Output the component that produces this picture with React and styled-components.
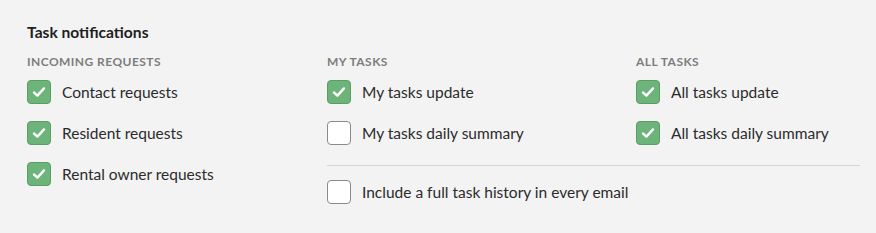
import React from "react";
import styled, { createGlobalStyle } from "styled-components";

const Global = createGlobalStyle`
  html, body { margin: 0; padding: 0; background: #f3f3f3; }
  body { font-family: "Lato", "Open Sans", sans-serif; color: #2b2b2b; }
`;

const Panel = styled.section`
  width: 876px;
  height: 233px;
  box-sizing: border-box;
  padding: 22px 16px 0 27px;
  background: #f3f3f3;
`;

const Title = styled.h2`
  margin: 0 0 12px;
  font-size: 15.6px;
  line-height: 20px;
  font-weight: 700;
  color: #1e1e1e;
`;

const Layout = styled.div`
  display: grid;
  grid-template-columns: 300px 1fr;
`;

const Right = styled.div`
  display: flex;
  flex-direction: column;
`;

const Pair = styled.div`
  display: grid;
  grid-template-columns: 309px 1fr;
`;

const Column = styled.div`
  display: flex;
  flex-direction: column;
`;

const Label = styled.div`
  font-size: 12px;
  line-height: 16px;
  font-weight: 700;
  letter-spacing: 0.45px;
  text-transform: uppercase;
  color: #7d7d7d;
  margin-bottom: 10px;
`;

const Row = styled.label`
  display: flex;
  align-items: center;
  gap: 11px;
  height: 24px;
  margin-bottom: 17px;
  font-size: 15.5px;
  color: #2b2b2b;
`;

const Box = styled.span`
  width: 24px;
  height: 24px;
  box-sizing: border-box;
  border-radius: 4px;
  flex: none;
  display: flex;
  align-items: center;
  justify-content: center;
  background: ${(p) => (p.$checked ? "#6cb47a" : "#ffffff")};
  border: 1px solid ${(p) => (p.$checked ? "#5a9d67" : "#8a8a8a")};
`;

const Divider = styled.hr`
  border: 0;
  border-top: 1.5px solid #d6d6d6;
  margin: 3px 0 14px;
  width: 100%;
`;

function Check({ checked, children }) {
  return (
    <Row>
      <Box $checked={checked}>
        {checked && (
          <svg width="14" height="12" viewBox="0 0 14 12">
            <path d="M2 6.5 L5.4 9.6 L12 2.4" fill="none" stroke="#fff" strokeWidth="2.4" strokeLinecap="round" strokeLinejoin="round" />
          </svg>
        )}
      </Box>
      {children}
    </Row>
  );
}

export default function App() {
  return (
    <>
      <Global />
      <Panel>
        <Title>Task notifications</Title>
        <Layout>
          <Column>
            <Label>Incoming requests</Label>
            <Check checked>Contact requests</Check>
            <Check checked>Resident requests</Check>
            <Check checked>Rental owner requests</Check>
          </Column>
          <Right>
            <Pair>
              <Column>
                <Label>My tasks</Label>
                <Check checked>My tasks update</Check>
                <Check>My tasks daily summary</Check>
              </Column>
              <Column>
                <Label>All tasks</Label>
                <Check checked>All tasks update</Check>
                <Check checked>All tasks daily summary</Check>
              </Column>
            </Pair>
            <Divider />
            <Check>Include a full task history in every email</Check>
          </Right>
        </Layout>
      </Panel>
    </>
  );
}
